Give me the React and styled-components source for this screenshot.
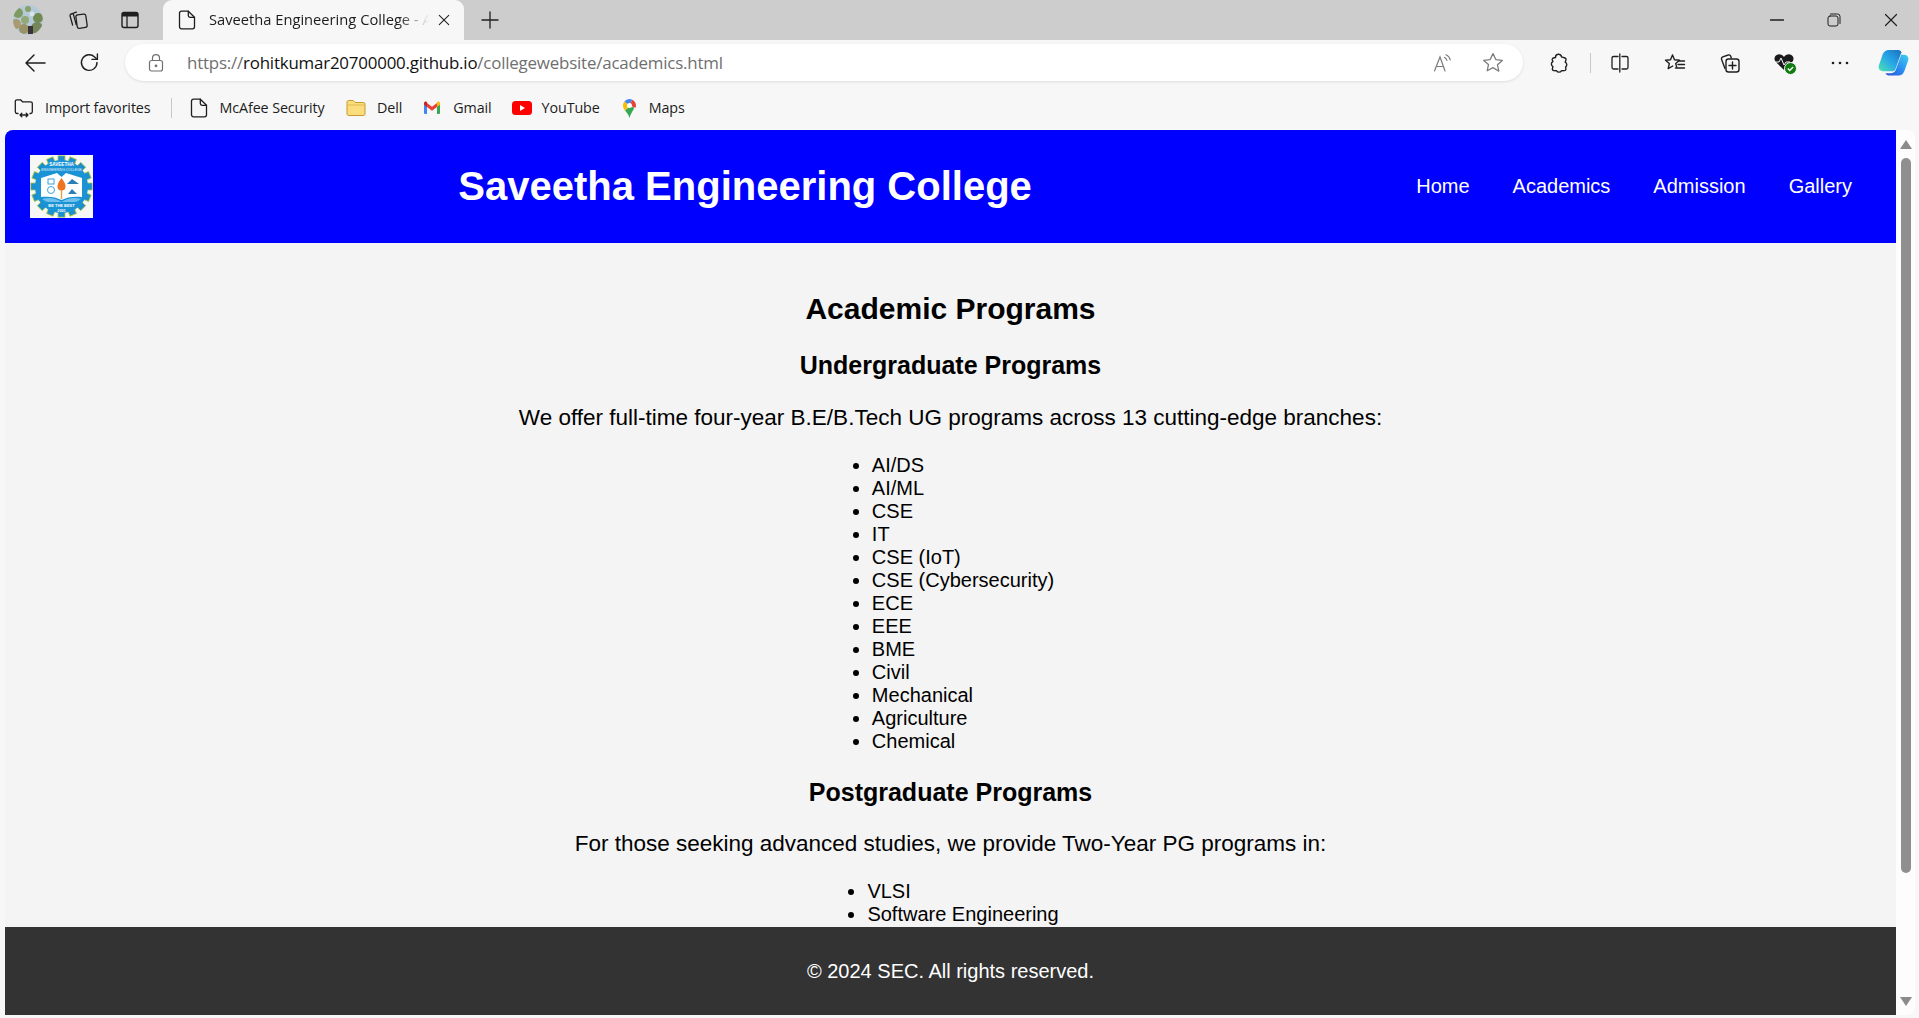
import React from "react";
import styled, { createGlobalStyle } from "styled-components";

const GlobalStyle = createGlobalStyle`
  html, body { margin: 0; padding: 0; height: 100%; overflow: hidden; }
  body { background: #f7f7f7; font-family: "Liberation Sans", Arial, sans-serif; }
  #root { height: 100%; }
`;

const Shell = styled.div`
  width: 1919px;
  height: 1018px;
  display: flex;
  flex-direction: column;
  overflow: hidden;
`;

const TitleBar = styled.div`
  height: 40px;
  flex: none;
  background: #cdcdcd;
  display: flex;
  align-items: stretch;
`;

const TitleSlot = styled.div`
  width: ${p => p.$w}px;
  margin-left: ${p => p.$ml || 0}px;
  flex: none;
  display: flex;
  align-items: center;
  justify-content: center;
`;

const Tab = styled.div`
  width: 301px;
  flex: none;
  margin-left: 18px;
  background: #f7f7f7;
  border-radius: 9px 9px 0 0;
  display: flex;
  align-items: center;
  padding: 0 14px 0 15px;
  box-sizing: border-box;
`;

const TabTitle = styled.span`
  flex: 1;
  margin: 0 9px 2px 13px;
  width: 0;
  white-space: nowrap;
  overflow: hidden;
  font: 400 14.7px "Open Sans", sans-serif;
  color: #1c1c1c;
  -webkit-mask-image: linear-gradient(to right, #000 86%, transparent 100%);
  mask-image: linear-gradient(to right, #000 86%, transparent 100%);
`;

const WindowControls = styled.div`
  margin-left: auto;
  display: flex;
  align-items: center;
`;

const Toolbar = styled.div`
  height: 45px;
  flex: none;
  background: #f7f7f7;
  display: flex;
  align-items: center;
`;

const ToolSlot = styled.div`
  width: ${p => p.$w}px;
  padding-left: ${p => p.$pl || 0}px;
  box-sizing: border-box;
  flex: none;
  display: flex;
  align-items: center;
  justify-content: center;
`;

const AddressBar = styled.div`
  width: 1398px;
  height: 37px;
  flex: none;
  margin-left: 15px;
  background: #fff;
  border-radius: 19px;
  box-shadow: 0 1px 3px rgba(0, 0, 0, 0.1);
  display: flex;
  align-items: center;
`;

const Url = styled.div`
  flex: 1;
  font: 400 16.9px "Open Sans", sans-serif;
  letter-spacing: -0.2px;
  color: #6f6f6f;
  white-space: nowrap;
`;

const UrlHost = styled.span`
  color: #111;
`;

const Divider = styled.div`
  width: 1px;
  height: ${p => p.$h}px;
  background: #c8c8c8;
  flex: none;
`;

const Bookmarks = styled.div`
  height: 45px;
  flex: none;
  background: #f7f7f7;
  display: flex;
  align-items: center;
  padding-left: 14px;
`;

const Bookmark = styled.div`
  display: flex;
  align-items: center;
  gap: ${p => p.$gap || 10}px;
  margin-left: ${p => p.$ml || 0}px;
  margin-right: ${p => p.$mr || 0}px;
  font: 400 14.3px "Open Sans", sans-serif;
  letter-spacing: -0.1px;
  color: #1c1c1c;
  white-space: nowrap;
`;

const PageFrame = styled.div`
  flex: 1;
  min-height: 0;
  display: flex;
  padding: 0 4px 3px 5px;
`;

const Viewport = styled.div`
  flex: 1;
  min-width: 0;
  display: flex;
  flex-direction: column;
  background: #f4f4f4;
  border-top-left-radius: 8px;
  overflow: hidden;
`;

const Header = styled.header`
  height: 113px;
  flex: none;
  background: #0000ff;
  display: flex;
  align-items: center;
  justify-content: space-between;
  padding: 0 23px 0 25px;
`;

const SiteTitle = styled.h1`
  margin: 0;
  font-size: 40px;
  font-weight: 700;
  color: #fff;
`;

const Nav = styled.nav`
  display: flex;
  gap: 43px;
  padding: 0 21px 0 19px;
`;

const NavLink = styled.a`
  color: #fff;
  font-size: 20px;
  text-decoration: none;
`;

const Main = styled.main`
  flex: 1;
  min-height: 0;
  overflow: hidden;
  text-align: center;
  padding-top: 47px;
`;

const Heading = styled.h2`
  margin: 0 0 23px;
  font-size: 30px;
  line-height: 37px;
  font-weight: 700;
  color: #000;
`;

const SubHeading = styled.h3`
  margin: 0 0 23.5px;
  font-size: 25px;
  line-height: 30px;
  font-weight: 700;
  color: #000;
`;

const Lead = styled.p`
  margin: 0 0 23px;
  font-size: 22.5px;
  line-height: 27px;
  color: #000;
`;

const ProgramList = styled.ul`
  display: inline-block;
  margin: 0 0 ${p => p.$mb || 0}px;
  padding: 0 15px 0 40px;
  text-align: left;
  font-size: 20px;
  line-height: 23px;
  color: #000;
  vertical-align: top;
`;

const Footer = styled.footer`
  height: 88px;
  flex: none;
  background: #333;
  color: #fff;
  display: flex;
  align-items: center;
  justify-content: center;
  font-size: 20px;
`;

const Scrollbar = styled.div`
  width: 19px;
  flex: none;
  background: #fdfdfd;
  border-radius: 0 8px 8px 0;
  display: flex;
  flex-direction: column;
  align-items: center;
  padding: 10px 0 9px;
  box-sizing: border-box;
`;

const ScrollArrow = styled.div`
  width: 0;
  height: 0;
  border-left: 6.5px solid transparent;
  border-right: 6.5px solid transparent;
  ${p => p.$down ? "border-top: 9px solid #8b8b8b;" : "border-bottom: 9px solid #8b8b8b;"}
  flex: none;
`;

const ScrollThumb = styled.div`
  width: 10px;
  height: 715px;
  margin-top: 9px;
  background: #8f8f8f;
  border-radius: 6px;
  flex: none;
`;

const ScrollSpace = styled.div`
  flex: 1;
`;

const line = { fill: "none", stroke: "#1f1f1f", strokeWidth: 1.3, strokeLinecap: "round", strokeLinejoin: "round" };

const DocIcon = () => (
  <svg width="18" height="20" viewBox="0 0 18 20" {...line}>
    <path d="M1.500 3.200a2 2 0 0 1 2-2h6.800l6.200 6.100v9.500a2 2 0 0 1-2 2h-11a2 2 0 0 1-2-2z" />
    <path d="M10.300 1.200v4.300a1.800 1.800 0 0 0 1.800 1.800h4.400" />
  </svg>
);

const Avatar = () => (
  <svg width="30" height="30" viewBox="0 0 30 30">
    <defs>
      <clipPath id="avatarClip"><circle cx="15" cy="15" r="15" /></clipPath>
    </defs>
    <g clipPath="url(#avatarClip)">
      <rect width="30" height="30" fill="#b4cad6" />
      <circle cx="5" cy="8" r="5" fill="#7f9a62" />
      <circle cx="15" cy="4" r="3" fill="#87a06c" />
      <circle cx="25" cy="13" r="5" fill="#708a52" />
      <circle cx="12" cy="15" r="4" fill="#92a878" />
      <circle cx="19" cy="9" r="2.500" fill="#d7e3e8" />
      <circle cx="3" cy="19" r="5" fill="#a99a72" />
      <circle cx="11" cy="24" r="5" fill="#9a9268" />
      <circle cx="24" cy="23" r="6" fill="#75875a" />
      <rect x="15" y="21" width="5" height="8" fill="#3a3338" />
    </g>
  </svg>
);

const CollectionsTabIcon = () => (
  <svg width="22" height="22" viewBox="0 0 22 22" {...line}>
    <path d="M6 4.500 4.200 5a1.600 1.600 0 0 0-1.100 2l2.500 9" />
    <path d="M9.500 3.200 7.600 3.700a1.600 1.600 0 0 0-1.100 2l2.700 10" />
    <rect x="9.500" y="5.500" width="10" height="13.500" rx="2" transform="rotate(-8 14 12)" />
  </svg>
);

const VerticalTabsIcon = () => (
  <svg width="20" height="20" viewBox="0 0 20 20">
    <rect x="2" y="2.500" width="16" height="15" rx="2" fill="none" stroke="#1f1f1f" strokeWidth="1.400" />
    <path d="M2 4.500a2 2 0 0 1 2-2h12a2 2 0 0 1 2 2v2H2z" fill="#1f1f1f" />
    <path d="M7 6v11" stroke="#1f1f1f" strokeWidth="1.300" />
  </svg>
);

const CrossIcon = ({ size = 14, color = "#1f1f1f" }) => (
  <svg width={size} height={size} viewBox="0 0 14 14" fill="none" stroke={color} strokeWidth="1.200" strokeLinecap="round">
    <path d="M1.500 1.500l11 11M12.500 1.500l-11 11" />
  </svg>
);

const PlusIcon = () => (
  <svg width="18" height="18" viewBox="0 0 18 18" {...line}>
    <path d="M9 1v16M1 9h16" />
  </svg>
);

const MinIcon = () => (
  <svg width="14" height="14" viewBox="0 0 14 14" {...line}>
    <path d="M0.500 7h13" />
  </svg>
);

const RestoreIcon = () => (
  <svg width="14" height="14" viewBox="0 0 14 14" {...line} strokeWidth="1">
    <rect x="1" y="3" width="10" height="10" rx="2" />
    <path d="M3.500 1h7a2.500 2.500 0 0 1 2.500 2.500v7" />
  </svg>
);

const BackIcon = () => (
  <svg width="22" height="20" viewBox="0 0 22 20" {...line} strokeWidth="1.500">
    <path d="M21 10H2M10 2l-8 8 8 8" />
  </svg>
);

const RefreshIcon = () => (
  <svg width="21" height="21" viewBox="0 0 21 21" {...line} strokeWidth="1.400">
    <path d="M18 10.500a7.800 7.800 0 1 1-2.400-5.600L18 7.200" />
    <path d="M18.400 2v5.400H13" />
  </svg>
);

const LockIcon = () => (
  <svg width="16" height="18" viewBox="0 0 16 18" fill="none" stroke="#707070" strokeWidth="1.200">
    <rect x="1.500" y="6.500" width="13" height="10.500" rx="2" />
    <path d="M4.500 6.500V4.200a3.500 3.500 0 0 1 7 0v2.300" />
    <circle cx="8" cy="11.800" r="0.800" fill="#707070" />
  </svg>
);

const ReadAloudIcon = () => (
  <svg width="20" height="20" viewBox="0 0 20 20" fill="none" stroke="#7c7c7c" strokeWidth="1.200" strokeLinecap="round">
    <path d="M1.500 18 7 4l5 14M3.300 13.500h7.400" />
    <path d="M11.500 4.500c1.200.6 2 1.600 2.400 2.900M13 1.800c2.200 1 3.700 2.800 4.200 5" />
  </svg>
);

const StarIcon = ({ stroke = "#7c7c7c" }) => (
  <svg width="22" height="21" viewBox="0 0 22 21" fill="none" stroke={stroke} strokeWidth="1.300" strokeLinejoin="round">
    <path d="M11 1.600l2.800 6 6.500.8-4.800 4.400 1.300 6.400L11 15.600l-5.800 3.200 1.300-6.400L1.700 8.400l6.500-.8z" />
  </svg>
);

const PuzzleIcon = () => (
  <svg width="20" height="20" viewBox="0 0 20 20" {...line} strokeWidth="1.400">
    <path d="M6.500 4.500a3 3 0 0 1 6-.6l3.500 1.100a1.500 1.500 0 0 1 1 1.800l-.8 2.400a2.800 2.800 0 0 1 .4 4.800l.3 1.900a1.500 1.500 0 0 1-1.500 1.700l-3 .1a2.700 2.700 0 0 1-4.800 0l-2.800-.1a1.500 1.500 0 0 1-1.400-1.800l.5-2.300a2.800 2.800 0 0 1 0-5l-.6-1.600a1.500 1.500 0 0 1 1-1.900z" />
  </svg>
);

const SplitIcon = () => (
  <svg width="20" height="20" viewBox="0 0 20 20" {...line} strokeWidth="1.300">
    <path d="M8 3.500H3.500A1.500 1.500 0 0 0 2 5v9.500A1.500 1.500 0 0 0 3.500 16H8M12 3.500h4.500A1.500 1.500 0 0 1 18 5v9.500a1.500 1.500 0 0 1-1.500 1.500H12M9.800 1v18" />
  </svg>
);

const FavoritesIcon = () => (
  <svg width="22" height="20" viewBox="0 0 22 20" {...line} strokeWidth="1.400">
    <path d="M8.500 2l2 4.700 5 .5-3.800 3.300 1 3.600M8.500 2 6.500 6.700l-5 .5 3.800 3.400-1.100 5 4.600-2.600" />
    <path d="M15 8h5.500M14 11.500h6.500M11.500 15H20.500" />
  </svg>
);

const CollectionsIcon = () => (
  <svg width="22" height="22" viewBox="0 0 22 22" {...line} strokeWidth="1.400">
    <path d="M6 16.500 2.600 7.400a2 2 0 0 1 1.200-2.600L9.200 3a2 2 0 0 1 2.600 1.200L12.200 6" />
    <rect x="7" y="7" width="13" height="13" rx="2.500" />
    <path d="M13.500 10v7M10 13.500h7" />
  </svg>
);

const HealthIcon = () => (
  <svg width="24" height="24" viewBox="0 0 24 24">
    <path d="M11 19 2.600 10.800C.2 8 1.800 3.200 6 3.200c2.200 0 3.800 1 5 2.800 1.200-1.800 2.800-2.800 5-2.800 4.200 0 5.800 4.800 3.400 7.600z" fill="#1a1a1a" />
    <path d="M1 11h5l2-4 3 7 2-3h4" fill="none" stroke="#f7f7f7" strokeWidth="1" />
    <circle cx="17.500" cy="17.500" r="6" fill="#107c10" stroke="#f7f7f7" strokeWidth="1" />
    <path d="M14.800 17.600l1.900 1.900 3.400-3.600" fill="none" stroke="#fff" strokeWidth="1.400" />
  </svg>
);

const MoreIcon = () => (
  <svg width="18" height="4" viewBox="0 0 18 4" fill="#1f1f1f">
    <circle cx="2" cy="2" r="1.300" />
    <circle cx="9" cy="2" r="1.300" />
    <circle cx="16" cy="2" r="1.300" />
  </svg>
);

const CopilotIcon = () => (
  <svg width="31" height="27" viewBox="0 0 32 28">
    <defs>
      <linearGradient id="copA" x1="0" y1="1" x2="1" y2="0">
        <stop offset="0" stopColor="#4fe3b0" />
        <stop offset="0.5" stopColor="#27a6e8" />
        <stop offset="1" stopColor="#1a6fc0" />
      </linearGradient>
      <linearGradient id="copB" x1="0" y1="1" x2="1" y2="0">
        <stop offset="0" stopColor="#2b4fd6" />
        <stop offset="0.5" stopColor="#2a8ff0" />
        <stop offset="1" stopColor="#3fd0f0" />
      </linearGradient>
    </defs>
    <path d="M11 1h10c1.500 0 2.700 1 3.200 2.300L18 21c-.5 1.400-1.700 2-3 2H5c-3.400 0-5.200-3-4.200-6l4-11.500C6 2.800 8.300 1 11 1z" fill="url(#copA)" />
    <path d="M24 6h3c3.500 0 5.200 3 4.200 6l-4 11c-1 2.700-3.300 4.500-6 4.500H11c-1.600 0-2.700-1-3.200-2.300h5.400c2.500 0 4.400-1.400 5.200-3.600z" fill="url(#copB)" />
  </svg>
);

const ImportIcon = () => (
  <svg width="20" height="20" viewBox="0 0 20 20" {...line}>
    <path d="M4 15.500H3a1.700 1.700 0 0 1-1.700-1.700V3.500A1.700 1.700 0 0 1 3 1.800h3.500l2 2h8A1.700 1.700 0 0 1 18.300 5.500v8.300a1.700 1.700 0 0 1-1.700 1.700H16" />
    <path d="M6 17h8M7.800 15.200 6 17l1.800 1.800M12.200 15.200 14 17l-1.800 1.800" />
  </svg>
);

const FolderIcon = () => (
  <svg width="20" height="18" viewBox="0 0 20 18">
    <path d="M1 3.200A1.700 1.700 0 0 1 2.700 1.500h4.500l2 2h8.100A1.700 1.700 0 0 1 19 5.200v9.600a1.700 1.700 0 0 1-1.700 1.700H2.700A1.700 1.700 0 0 1 1 14.800z" fill="#fbdd7e" stroke="#c69a2b" strokeWidth="1" />
    <path d="M1 6h18" stroke="#e2b94a" strokeWidth="1" />
  </svg>
);

const GmailIcon = () => (
  <svg width="18" height="14" viewBox="0 0 18 14">
    <path d="M1 13V3l3 2.300V13H2a1 1 0 0 1-1-1z" fill="#4285f4" />
    <path d="M14 13V5.300L17 3v9a1 1 0 0 1-1 1z" fill="#34a853" />
    <path d="M4 6V2l5 3.800L14 2v4L9 9.800z" fill="#ea4335" />
    <path d="M1 3.500V2.200C1 .8 2.600 0 3.700.9L4 1.200V6z" fill="#c5221f" />
    <path d="M17 3.500V2.200C17 .8 15.400 0 14.300.9L14 1.200V6z" fill="#fbbc04" />
  </svg>
);

const YoutubeIcon = () => (
  <svg width="20" height="14" viewBox="0 0 20 14">
    <rect width="20" height="14" rx="3.500" fill="#f00" />
    <path d="M8 4l5 3-5 3z" fill="#fff" />
  </svg>
);

const MapsIcon = () => (
  <svg width="15" height="20" viewBox="0 0 15 20">
    <path d="M7.500 20C6.600 16.600 4.600 14.600 3 12.600l4.500-4 5 1C11 13 8.500 16 7.500 20z" fill="#34a853" />
    <path d="M3 12.600C1.800 11.200 1 9.700 1 7.500c0-1.600.5-3 1.500-4l5 4z" fill="#fbbc04" />
    <path d="M2.500 3.500C3.700 2 5.500 1 7.500 1c1 0 2 .2 2.800.7L7.500 7.500z" fill="#4285f4" />
    <path d="M10.300 1.700C12.500 2.800 14 5 14 7.500c0 .8-.2 1.600-.4 2.200L7.500 7.500z" fill="#ea4335" />
    <circle cx="7.500" cy="7.500" r="2.500" fill="#fff" />
  </svg>
);

const CollegeLogo = () => (
  <svg width="63" height="63" viewBox="0 0 63 63" fontFamily="Liberation Sans, sans-serif" textAnchor="middle">
    <rect width="63" height="63" fill="#f7f7f5" />
    {Array.from({ length: 16 }, (_, i) => (
      <rect key={i} x="28" y="0.800" width="7" height="6" fill="#1b8fd0" stroke="#b9c93c" strokeWidth="0.800" transform={`rotate(${i * 22.5} 31.5 31.5)`} />
    ))}
    <circle cx="31.500" cy="31.500" r="26.500" fill="#1a93d6" />
    <path d="M11 23 27 18l4.500 4 4.500-4 16 5v19c-8-1-15 0-20.500 3C26 42 19 41 11 42z" fill="#fff" />
    <path d="M12 44c6-2 14-1 19.500 3 5.500-4 13.500-5 19.500-3-3 2-4 3-7 3H19c-3 0-4-1-7-3z" fill="#6fc0ea" />
    <circle cx="21" cy="35" r="3.500" fill="none" stroke="#3aa4dc" strokeWidth="1" />
    <rect x="18" y="24" width="6" height="5" fill="none" stroke="#3aa4dc" strokeWidth="1" />
    <path d="M37 29l5-5 7 5zM38 39l4-5 5 5z" fill="#2a7fb5" />
    <path d="M31.500 23c3 4 4 6 4 8.500a4 4 0 0 1-8 0c0-2.500 1-4.500 4-8.500z" fill="#ee7522" />
    <rect x="30.800" y="35" width="1.400" height="9" fill="#e9a13a" />
    <text x="31.500" y="11" fontSize="4.600" fontWeight="700" fill="#fff">SAVEETHA</text>
    <text x="31.500" y="16" fontSize="3.400" fill="#e6f3fa">ENGINEERING COLLEGE</text>
    <text x="31.500" y="52" fontSize="4" fontWeight="700" fill="#fff">BE THE BEST</text>
    <text x="31.500" y="57" fontSize="3.800" fontWeight="700" fill="#fff">2001</text>
  </svg>
);

const undergraduate = ["AI/DS", "AI/ML", "CSE", "IT", "CSE (IoT)", "CSE (Cybersecurity)", "ECE", "EEE", "BME", "Civil", "Mechanical", "Agriculture", "Chemical"];
const postgraduate = ["VLSI", "Software Engineering"];
const navLinks = ["Home", "Academics", "Admission", "Gallery"];

function App() {
  return (
    <Shell>
      <GlobalStyle />
      <TitleBar>
        <TitleSlot $w={30} $ml={13}><Avatar /></TitleSlot>
        <TitleSlot $w={30} $ml={20}><CollectionsTabIcon /></TitleSlot>
        <TitleSlot $w={30} $ml={22}><VerticalTabsIcon /></TitleSlot>
        <Tab>
          <DocIcon />
          <TabTitle>Saveetha Engineering College - Academics</TabTitle>
          <CrossIcon size={12} />
        </Tab>
        <TitleSlot $w={30} $ml={11}><PlusIcon /></TitleSlot>
        <WindowControls>
          <TitleSlot $w={56}><MinIcon /></TitleSlot>
          <TitleSlot $w={58}><RestoreIcon /></TitleSlot>
          <TitleSlot $w={56}><CrossIcon /></TitleSlot>
        </WindowControls>
      </TitleBar>

      <Toolbar>
        <ToolSlot $w={69}><BackIcon /></ToolSlot>
        <ToolSlot $w={41}><RefreshIcon /></ToolSlot>
        <AddressBar>
          <ToolSlot $w={62}><LockIcon /></ToolSlot>
          <Url>https://<UrlHost>rohitkumar20700000.github.io</UrlHost>/collegewebsite/academics.html</Url>
          <ToolSlot $w={50}><ReadAloudIcon /></ToolSlot>
          <ToolSlot $w={49}><StarIcon /></ToolSlot>
          <ToolSlot $w={6} />
        </AddressBar>
        <ToolSlot $w={67} $pl={5}><PuzzleIcon /></ToolSlot>
        <Divider $h={20} />
        <ToolSlot $w={57}><SplitIcon /></ToolSlot>
        <ToolSlot $w={54}><FavoritesIcon /></ToolSlot>
        <ToolSlot $w={55}><CollectionsIcon /></ToolSlot>
        <ToolSlot $w={55}><HealthIcon /></ToolSlot>
        <ToolSlot $w={55}><MoreIcon /></ToolSlot>
        <ToolSlot $w={52}><CopilotIcon /></ToolSlot>
      </Toolbar>

      <Bookmarks>
        <Bookmark $gap={11} $mr={20}><ImportIcon />Import favorites</Bookmark>
        <Divider $h={20} />
        <Bookmark $gap={12} $ml={18} $mr={21.5}><DocIcon />McAfee Security</Bookmark>
        <Bookmark $gap={11} $mr={21}><FolderIcon />Dell</Bookmark>
        <Bookmark $gap={12} $mr={20}><GmailIcon />Gmail</Bookmark>
        <Bookmark $gap={10} $mr={22}><YoutubeIcon />YouTube</Bookmark>
        <Bookmark $gap={12}><MapsIcon />Maps</Bookmark>
      </Bookmarks>

      <PageFrame>
        <Viewport>
          <Header>
            <CollegeLogo />
            <SiteTitle>Saveetha Engineering College</SiteTitle>
            <Nav>
              {navLinks.map(link => <NavLink key={link}>{link}</NavLink>)}
            </Nav>
          </Header>
          <Main>
            <Heading>Academic Programs</Heading>
            <SubHeading>Undergraduate Programs</SubHeading>
            <Lead>We offer full-time four-year B.E/B.Tech UG programs across 13 cutting-edge branches:</Lead>
            <ProgramList $mb={24.3}>
              {undergraduate.map(item => <li key={item}>{item}</li>)}
            </ProgramList>
            <SubHeading>Postgraduate Programs</SubHeading>
            <Lead>For those seeking advanced studies, we provide Two-Year PG programs in:</Lead>
            <ProgramList>
              {postgraduate.map(item => <li key={item}>{item}</li>)}
            </ProgramList>
          </Main>
          <Footer>© 2024 SEC. All rights reserved.</Footer>
        </Viewport>
        <Scrollbar>
          <ScrollArrow />
          <ScrollThumb />
          <ScrollSpace />
          <ScrollArrow $down />
        </Scrollbar>
      </PageFrame>
    </Shell>
  );
}

export default App;
